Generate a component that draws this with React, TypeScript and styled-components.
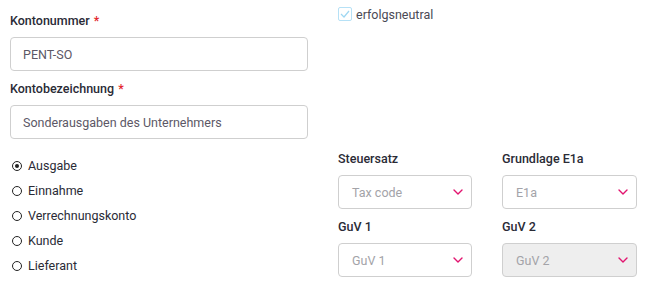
import * as React from "react";
import styled, { createGlobalStyle } from "styled-components";

const pink = "#e2146f";
const ink = "#2a2b36";
const border = "#cfcfcf";

const GlobalStyle = createGlobalStyle`
  body {
    margin: 0;
    background: #fff;
    font-family: Roboto, "Noto Sans", sans-serif;
    color: ${ink};
  }
`;

const Page = styled.div`
  display: grid;
  grid-template-columns: 298px 299px;
  column-gap: 30px;
  padding: 0 0 0 10px;
  width: 647px;
  height: 289px;
  box-sizing: border-box;
`;

const Column = styled.div`
  display: flex;
  flex-direction: column;
`;

const Label = styled.label<{ $top?: number }>`
  display: block;
  font-size: 12.5px;
  font-weight: 500;
  line-height: 18px;
  height: 18px;
  margin-top: ${(p) => p.$top ?? 9}px;
  margin-bottom: 7px;
  color: ${ink};
`;

const Required = styled.span`
  color: #e3262d;
  margin-left: 4px;
`;

const TextInput = styled.input`
  box-sizing: border-box;
  width: 298px;
  height: 34px;
  border: 1px solid ${border};
  border-radius: 4px;
  padding: 0 12px;
  font-family: inherit;
  font-size: 12.5px;
  color: #5c5866;
  outline: none;
  background: #fff;
`;

const RadioList = styled.div`
  display: flex;
  flex-direction: column;
  margin-top: 14px;
`;

const RadioRow = styled.label`
  display: flex;
  align-items: center;
  height: 25px;
  font-size: 12.5px;
  color: ${ink};
  gap: 6px;
  padding-left: 2px;
`;

const RadioDot = styled.span<{ $checked?: boolean }>`
  box-sizing: border-box;
  width: 10px;
  height: 10px;
  border-radius: 50%;
  border: 1.3px solid #222;
  display: inline-flex;
  align-items: center;
  justify-content: center;
  &::after {
    content: "";
    width: 4px;
    height: 4px;
    border-radius: 50%;
    background: #222;
    display: ${(p) => (p.$checked ? "block" : "none")};
  }
`;

const CheckRow = styled.label`
  display: flex;
  align-items: center;
  gap: 4px;
  margin-top: 7px;
  height: 14px;
  font-size: 12.5px;
  color: #4a4a55;
`;

const CheckBox = styled.span`
  box-sizing: border-box;
  width: 14px;
  height: 14px;
  border: 1px solid #b6e1f6;
  border-radius: 2px;
  display: inline-flex;
  align-items: center;
  justify-content: center;
`;

const SelectGrid = styled.div`
  display: grid;
  grid-template-columns: 134px 135px;
  column-gap: 30px;
  margin-top: 120px;
`;

const Field = styled.div`
  display: flex;
  flex-direction: column;
`;

const SelectBox = styled.div<{ $disabled?: boolean }>`
  box-sizing: border-box;
  height: 34px;
  border: 1px solid ${border};
  border-radius: 4px;
  background: ${(p) => (p.$disabled ? "#eeeeee" : "#fff")};
  display: flex;
  align-items: center;
  justify-content: space-between;
  padding: 0 8px 0 13px;
  font-size: 12.5px;
  color: #a3a3a8;
`;

const Chevron = () => (
  <svg width="10" height="6" viewBox="0 0 10 6">
    <path d="M1 1l4 4 4-4" fill="none" stroke={pink} strokeWidth="1.4" strokeLinecap="round" strokeLinejoin="round" />
  </svg>
);

const Select: React.FC<{ value: string; disabled?: boolean }> = ({ value, disabled }) => (
  <SelectBox $disabled={disabled}>
    <span>{value}</span>
    <Chevron />
  </SelectBox>
);

const types = ["Ausgabe", "Einnahme", "Verrechnungskonto", "Kunde", "Lieferant"];

export default function App() {
  return (
    <>
      <GlobalStyle />
      <Page>
        <Column>
          <Label $top={12}>
            Kontonummer<Required>*</Required>
          </Label>
          <TextInput defaultValue="PENT-SO" />
          <Label>
            Kontobezeichnung<Required>*</Required>
          </Label>
          <TextInput defaultValue="Sonderausgaben des Unternehmers" />
          <RadioList>
            {types.map((t, i) => (
              <RadioRow key={t}>
                <RadioDot $checked={i === 0} />
                {t}
              </RadioRow>
            ))}
          </RadioList>
        </Column>
        <Column>
          <CheckRow>
            <CheckBox>
              <svg width="10" height="8" viewBox="0 0 10 8">
                <path d="M1 4l3 3 5-6" fill="none" stroke="#9fd7f2" strokeWidth="1.2" />
              </svg>
            </CheckBox>
            erfolgsneutral
          </CheckRow>
          <SelectGrid>
            <Field>
              <Label $top={9}>Steuersatz</Label>
              <Select value="Tax code" />
            </Field>
            <Field>
              <Label $top={9}>Grundlage E1a</Label>
              <Select value="E1a" />
            </Field>
            <Field>
              <Label>GuV 1</Label>
              <Select value="GuV 1" />
            </Field>
            <Field>
              <Label>GuV 2</Label>
              <Select value="GuV 2" disabled />
            </Field>
          </SelectGrid>
        </Column>
      </Page>
    </>
  );
}
